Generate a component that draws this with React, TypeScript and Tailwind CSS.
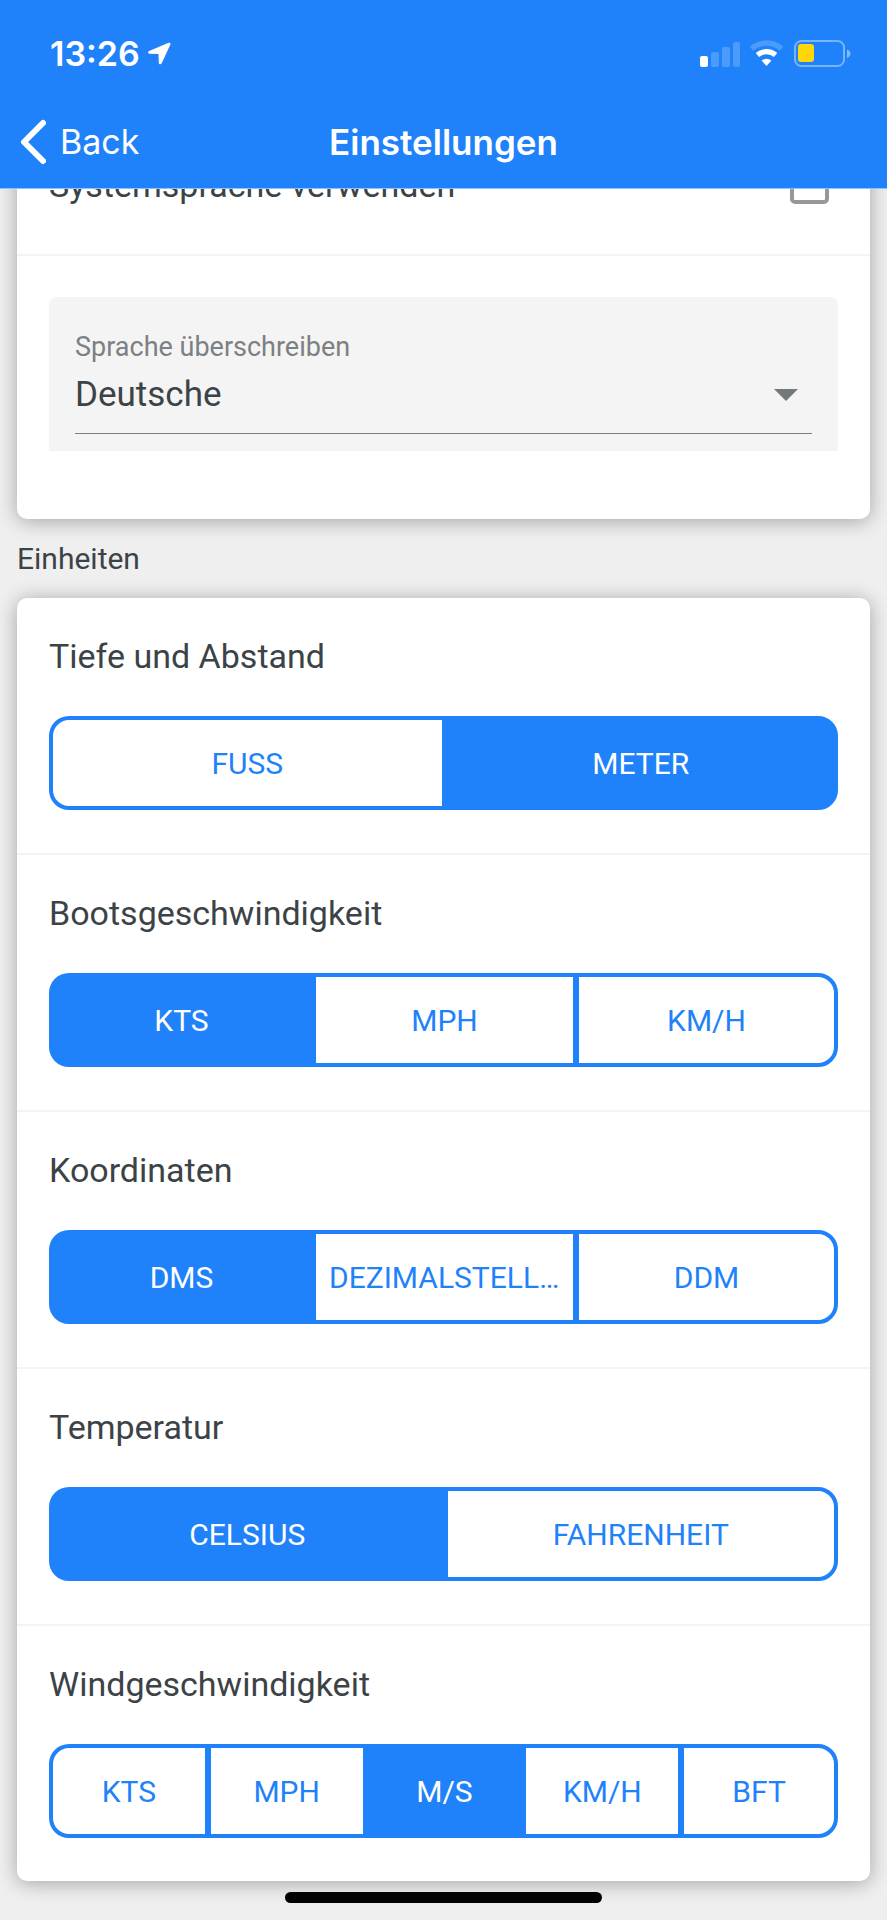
import { useId, useState } from "react";
import clsx from "clsx";

const units = [
  { title: "Tiefe und Abstand", options: ["FUSS", "METER"], selected: 1 },
  { title: "Bootsgeschwindigkeit", options: ["KTS", "MPH", "KM/H"], selected: 0 },
  { title: "Koordinaten", options: ["DMS", "DEZIMALSTELLEN", "DDM"], selected: 0 },
  { title: "Temperatur", options: ["CELSIUS", "FAHRENHEIT"], selected: 0 },
  { title: "Windgeschwindigkeit", options: ["KTS", "MPH", "M/S", "KM/H", "BFT"], selected: 2 },
];

function StatusBar() {
  return (
    <div className="flex h-[95px] items-center justify-between pt-3 pr-[35px] pl-[50px]">
      <div className="flex items-center gap-2">
        <span className="text-[34px] leading-10 font-semibold">13:26</span>
        <svg width="23" height="23" viewBox="0 0 23 23" fill="currentColor" aria-hidden="true">
          <path d="M20.6.8 1.1 8.9C-.4 9.6-.1 11.6 1.6 11.7l8.9.3.3 8.9c.1 1.7 2.2 1.9 2.9.4L22.4 2.5C22.9 1.2 21.9.3 20.6.8z" />
        </svg>
      </div>
      <div className="flex items-center" aria-hidden="true">
        <svg width="41" height="26" viewBox="0 0 41 26" fill="white">
          <rect x="0" y="15" width="8" height="11" rx="2" />
          <rect x="11" y="11" width="8" height="15" rx="2" opacity=".2" />
          <rect x="22" y="6" width="8" height="20" rx="2" opacity=".2" />
          <rect x="33" y="1" width="7" height="25" rx="2" opacity=".2" />
        </svg>
        <svg className="ml-2" width="35" height="27" viewBox="0 0 35 27" fill="none" stroke="white">
          <path d="M2.5 8.8a22.5 22.5 0 0 1 30 0" strokeWidth="5.4" opacity=".2" />
          <path d="M8.4 15a14 14 0 0 1 18.2 0" strokeWidth="5.2" />
          <path d="M12.6 20.6a7.4 7.4 0 0 1 9.8 0L17.5 26z" fill="white" stroke="none" />
        </svg>
        <svg className="ml-[10px]" width="58" height="28" viewBox="0 0 58 28">
          <rect x="1" y="1" width="49" height="25" rx="6.5" fill="none" stroke="white" strokeWidth="2" opacity=".4" />
          <rect x="4" y="4" width="16" height="18" rx="3" fill="#ffd60a" />
          <path d="M53 9.5c4.6 1.6 4.6 7 0 8.6z" fill="white" opacity=".45" />
        </svg>
      </div>
    </div>
  );
}

function Header() {
  return (
    <header className="relative z-10 border-b border-[#8fc1fd] bg-[#1f82fb] font-[Inter,sans-serif] text-white">
      <StatusBar />
      <nav className="grid h-[93px] grid-cols-[1fr_auto_1fr] items-center px-5">
        <button type="button" className="flex items-center gap-[14px] justify-self-start text-[34px] leading-10">
          <svg width="26" height="46" viewBox="0 0 26 46" fill="none" stroke="currentColor" aria-hidden="true">
            <path d="M23 4 4 23l19 19" strokeWidth="6" strokeLinecap="round" strokeLinejoin="round" />
          </svg>
          <span>Back</span>
        </button>
        <h1 className="text-[35px] leading-10 font-semibold">Einstellungen</h1>
      </nav>
    </header>
  );
}

function UnitRow({ title, options, selected }: { title: string; options: string[]; selected: number }) {
  const [active, setActive] = useState(selected);
  const id = useId();

  return (
    <section className="border-b-2 border-[#f4f4f4] px-8 pt-[38px] pb-[43px] last:border-b-0">
      <h3 id={id} className="text-[34px] leading-10">{title}</h3>
      <div
        role="group"
        aria-labelledby={id}
        className="mt-10 grid h-[94px] auto-cols-[minmax(0,1fr)] grid-flow-col text-[30px] leading-9"
      >
        {options.map((option, i) => (
          <button
            key={option}
            type="button"
            aria-pressed={i === active}
            onClick={() => setActive(i)}
            className={clsx(
              "truncate border-y-4 border-r-2 border-l-4 border-[#1f82fb] px-[13px] pt-0.5 first:rounded-l-[20px] last:rounded-r-[20px] last:border-r-4",
              i === active ? "bg-[#1f82fb] text-white" : "bg-white text-[#1f82fb]"
            )}
          >
            {option}
          </button>
        ))}
      </div>
    </section>
  );
}

export default function App() {
  return (
    <div className="min-h-screen overflow-hidden bg-[#efefef] font-[Roboto,sans-serif] text-[#3c4346]">
      <Header />

      <main className="px-[17px]">
        {/* Language card, scrolled partly under the header */}
        <div className="-mt-[74px] rounded-[10px] bg-white shadow-[0_2px_20px_rgba(0,0,0,0.32)]">
          <label className="flex h-[141px] items-center justify-between border-b-2 border-[#f4f4f4] pr-[41px] pl-8 text-[34px] leading-10">
            Systemsprache verwenden
            <input type="checkbox" className="size-[39px] appearance-none rounded-[5px] border-4 border-[#96999c] checked:bg-[#1f82fb]" />
          </label>
          <div className="px-8 pt-[41px] pb-[68px]">
            <div className="rounded-t-lg bg-[#f4f4f4] px-[26px] pt-[34px] pb-[17px]">
              <label htmlFor="language" className="block text-[27px] leading-8 text-[#7c8082]">
                Sprache überschreiben
              </label>
              <div className="relative border-b border-[#7c8082] pb-[10px]">
                <select id="language" defaultValue="de" className="block h-[60px] w-full appearance-none bg-transparent pt-1 text-[35px]">
                  <option value="de">Deutsche</option>
                  <option value="en">English</option>
                </select>
                <svg className="pointer-events-none absolute top-[26px] right-[14px]" width="24" height="12" viewBox="0 0 24 12" fill="#73787b" aria-hidden="true">
                  <path d="M0 0h24L12 12z" />
                </svg>
              </div>
            </div>
          </div>
        </div>

        <h2 className="pt-5 pb-[19px] text-[30px] leading-10">Einheiten</h2>

        {/* Units card */}
        <div className="rounded-[10px] bg-white shadow-[0_2px_20px_rgba(0,0,0,0.32)]">
          {units.map((unit) => (
            <UnitRow key={unit.title} {...unit} />
          ))}
        </div>
      </main>

      {/* Home indicator */}
      <div className="relative mx-auto mt-[11px] mb-[17px] h-[11px] w-[317px] rounded-full bg-black"></div>
    </div>
  );
}
